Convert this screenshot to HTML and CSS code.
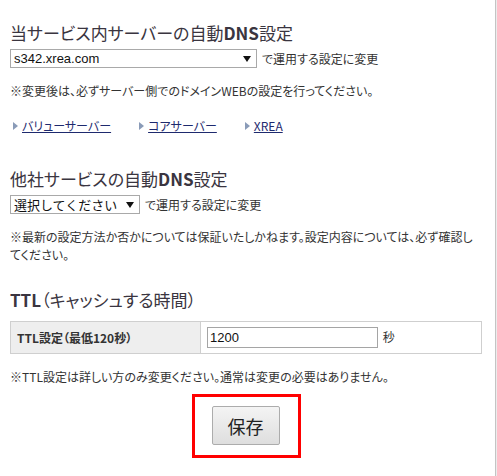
FILE: index.html
```html
<!DOCTYPE html>
<html lang="ja">
<head>
    <meta charset="UTF-8">
    <title>DNS設定</title>
    <link rel="stylesheet" href="styles.css">
</head>
<body>

<div class="page">
    <h2 class="title">当サービス内サーバーの自動<b>DNS</b>設定</h2>
    <div class="row">
        <span class="select-wrap">
            <select class="server-select">
                <option>s342.xrea.com</option>
            </select>
        </span>
        <span class="row-text">で運用する設定に変更</span>
    </div>
    <p class="note">※変更後は、必ずサーバー側でのドメインWEBの設定を行ってください。</p>
    <ul class="links">
        <li><a href="#">バリューサーバー</a></li>
        <li><a href="#">コアサーバー</a></li>
        <li><a href="#">XREA</a></li>
    </ul>

    <h2 class="title">他社サービスの自動<b>DNS</b>設定</h2>
    <div class="row">
        <span class="select-wrap">
            <select class="other-select">
                <option>選択してください</option>
            </select>
        </span>
        <span class="row-text">で運用する設定に変更</span>
    </div>
    <p class="note">※最新の設定方法か否かについては保証いたしかねます。設定内容については、必ず確認してください。</p>

    <h2 class="title ttl-title"><b>TTL</b>（キャッシュする時間）</h2>
    <table class="ttl-table">
        <tr>
            <th>TTL設定（最低120秒）</th>
            <td><input type="text" class="ttl-input" value="1200"> 秒</td>
        </tr>
    </table>
    <p class="note">※TTL設定は詳しい方のみ変更ください。通常は変更の必要はありません。</p>

    <div class="save-area">
        <div class="save-box">
            <button class="save-btn">保存</button>
        </div>
    </div>
</div>
<div class="edge"></div>

</body>
</html>
```

FILE: styles.css
```css
body {
    margin: 0;
    display: flex;
    min-height: 100vh;
    background-color: white;
    color: #333;
    font-family: "Noto Sans CJK JP", sans-serif;
    font-feature-settings: "palt";
}
.page {
    width: 472px;
    padding: 0 10px;
}
.edge {
    width: 4px;
    margin-left: 3px;
    border-left: 1px solid #c4c4c4;
    background-color: #ececec;
}
.title {
    font-size: 17px;
    font-weight: normal;
    line-height: 26px;
    margin: 20px 0 3px;
    color: #3a3540;
}
.title b {
    font-weight: bold;
}
.ttl-title {
    margin-top: 23px;
}
.row {
    display: flex;
    align-items: center;
    font-size: 12px;
}
.select-wrap {
    position: relative;
    display: inline-block;
}
.select-wrap::after {
    content: "";
    position: absolute;
    right: 6px;
    top: 7px;
    border-left: 4px solid transparent;
    border-right: 4px solid transparent;
    border-top: 6px solid #111;
    pointer-events: none;
}
.select-wrap select {
    appearance: none;
    -webkit-appearance: none;
    height: 19px;
    border: 1px solid #a9a9a9;
    border-radius: 0;
    background: white;
    color: #111;
    padding: 0 18px 0 3px;
    margin: 0;
}
.server-select {
    width: 247px;
    font-family: "Liberation Sans", Arial, sans-serif;
    font-size: 13px;
}
.other-select {
    width: 130px;
    font-family: "Noto Sans CJK JP", sans-serif;
    font-size: 13px;
    line-height: 17px;
}
.row-text {
    margin-left: 5px;
}
.note {
    font-size: 12px;
    line-height: 18px;
    margin: 14px 0 0;
}
.links {
    list-style: none;
    display: flex;
    padding: 0;
    margin: 17px 0 32px;
    font-size: 12px;
}
.links li {
    position: relative;
    padding-left: 12px;
    margin-right: 25px;
}
.links li::before {
    content: "";
    position: absolute;
    left: 3px;
    top: 5px;
    border-top: 4px solid transparent;
    border-bottom: 4px solid transparent;
    border-left: 5px solid #8a9bb8;
}
.links a {
    color: #1e2a6e;
}
.ttl-table {
    width: 472px;
    border-collapse: collapse;
    margin-top: 8px;
    font-size: 12px;
}
.ttl-table th,
.ttl-table td {
    border: 1px solid #cfcfcf;
    height: 31px;
    padding: 0 6px;
}
.ttl-table th {
    width: 177px;
    text-align: left;
    background-color: #eeeeee;
    font-weight: bold;
}
.ttl-input {
    width: 165px;
    height: 17px;
    border: 1px solid #a5a5a5;
    padding: 1px 2px;
    font-family: "Liberation Sans", Arial, sans-serif;
    font-size: 13px;
    color: #111;
    margin-right: 2px;
}
.save-area {
    display: flex;
    justify-content: center;
    margin-top: 8px;
}
.save-box {
    border: 3px solid #ff0000;
    padding: 9px 18px 10px 17px;
}
.save-btn {
    width: 68px;
    height: 39px;
    border: 1px solid #acacac;
    border-radius: 2px;
    background: linear-gradient(#f4f4f4, #dedede);
    font-family: "Noto Sans CJK JP", sans-serif;
    font-size: 18px;
    color: #222;
}
```
